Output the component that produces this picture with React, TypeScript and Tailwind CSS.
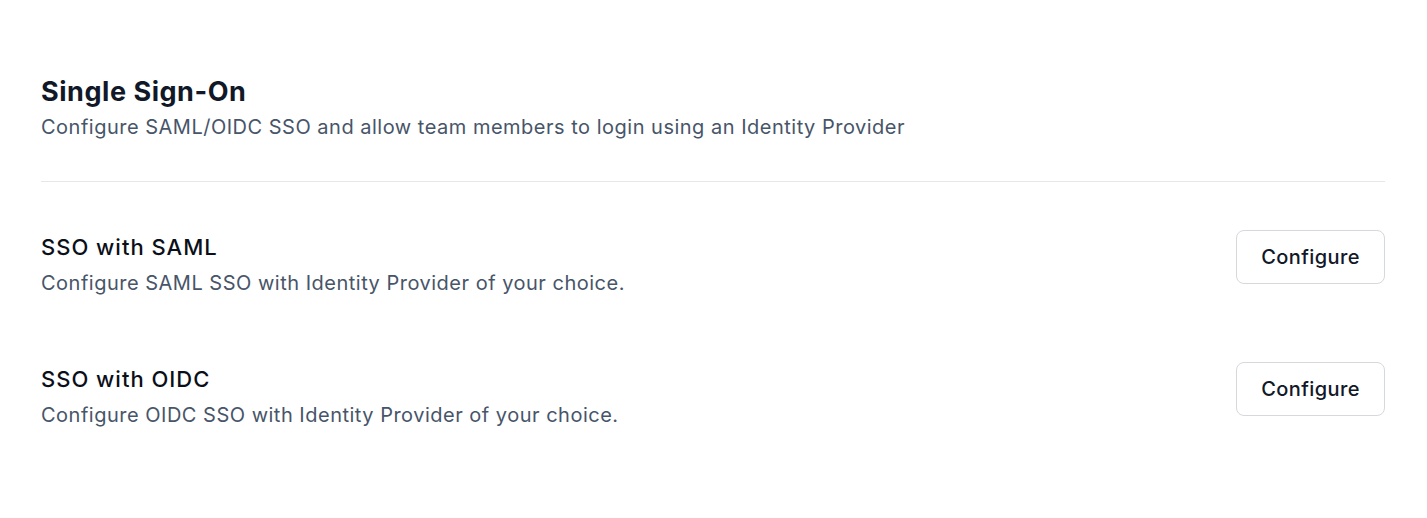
import React from "react";

const options = [
  {
    id: "saml",
    title: "SSO with SAML",
    description: "Configure SAML SSO with Identity Provider of your choice.",
  },
  {
    id: "oidc",
    title: "SSO with OIDC",
    description: "Configure OIDC SSO with Identity Provider of your choice.",
  },
];

const App = () => {
  return (
    <div className="min-h-screen bg-white font-['Inter',sans-serif] pl-[41px] pr-[42px] pt-[76px]">
      <div className="pb-[40px] border-b border-[#e5e7eb]">
        <h1 className="text-[27px] leading-[32px] font-bold tracking-[0.02em] text-[#111827]">
          Single Sign-On
        </h1>
        <p className="mt-[5px] text-[20px] leading-[28px] tracking-[0.025em] text-[#475569]">
          Configure SAML/OIDC SSO and allow team members to login using an Identity Provider
        </p>
      </div>

      <div className="flex flex-col gap-[65px] pt-[48px]">
        {options.map((item) => (
          <div key={item.id} className="flex items-start justify-between">
            <div className="pt-[2px]">
              <h3 className="text-[22px] leading-[30px] font-medium tracking-[0.045em] text-[#0b0f19]">
                {item.title}
              </h3>
              <p className="mt-[7px] text-[20px] leading-[28px] tracking-[0.025em] text-[#475569]">
                {item.description}
              </p>
            </div>
            <button className="h-[54px] w-[149px] rounded-lg border border-[#d6d8dd] bg-white text-[20px] font-medium tracking-[0.02em] text-[#111827]">
              Configure
            </button>
          </div>
        ))}
      </div>
    </div>
  );
};

export default App;
